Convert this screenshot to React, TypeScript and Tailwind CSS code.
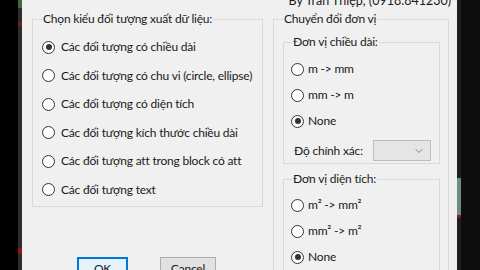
import React from 'react';
import { ChevronDown } from 'lucide-react';

const Radio = ({ checked = false }: { checked?: boolean }) => (
  <span className="w-[13px] h-[13px] shrink-0 rounded-full border border-[#333333] bg-white flex items-center justify-center">
    {checked && <span className="w-[6px] h-[6px] rounded-full bg-[#333333]" />}
  </span>
);

const exportOptions = [
  { label: 'Các đối tượng có chiều dài', checked: true },
  { label: 'Các đối tượng có chu vi (circle, ellipse)' },
  { label: 'Các đối tượng có diện tích' },
  { label: 'Các đối tượng kích thước chiều dài' },
  { label: 'Các đối tượng att trong block có att' },
  { label: 'Các đối tượng text' },
];

const lengthOptions = [
  { label: 'm -> mm' },
  { label: 'mm -> m' },
  { label: 'None', checked: true },
];

const areaOptions = [
  { label: 'm² -> mm²' },
  { label: 'mm² -> m²' },
  { label: 'None', checked: true },
];

const App = () => {
  return (
    <div
      className="w-[480px] h-[270px] flex overflow-hidden bg-black text-[12px] tracking-[-0.2px] text-[#1a1a1a]"
      style={{ fontFamily: 'Lato, "Liberation Sans", sans-serif' }}
    >
      {/* Left edge of screen */}
      <div className="w-[18px] shrink-0 bg-black" />
      <div className="w-[4px] shrink-0 bg-[#2d2d2d] flex flex-col">
        <div className="h-[8px] bg-[#3f6b3a]" />
        <div className="h-[14px]" />
        <div className="h-[4px] bg-[#7a1c1c]" />
        <div className="h-[222px]" />
        <div className="h-[6px] bg-[#8a1a1a]" />
      </div>

      {/* Dialog */}
      <div className="w-[435px] shrink-0 bg-[#f0f0f0] overflow-hidden">
        <div className="flex justify-end pr-[6px] -mt-[7px] leading-[16px] text-[12.5px] tracking-normal">
          By Trần Thiệp, (0918.841230)
        </div>

        <div className="flex items-start mt-[2px] pl-[10px]">
          {/* Left column */}
          <div className="w-[231px] shrink-0">
            <fieldset className="w-[231px] min-w-0 border border-[#d9d9d9] px-[9px] pt-[6px] pb-[2px]">
              <legend className="px-[1px] leading-[16px]">Chọn kiểu đối tượng xuất dữ liệu:</legend>
              {exportOptions.map((o) => (
                <div key={o.label} className="h-[28.5px] flex items-center gap-[6px] whitespace-nowrap">
                  <Radio checked={o.checked} />
                  <span>{o.label}</span>
                </div>
              ))}
            </fieldset>

            <div className="flex gap-[32px] mt-[50px] ml-[45px]">
              <button className="w-[51px] h-[23px] bg-[#e5f1fb] border-2 border-[#0078d7] leading-[19px] text-center">
                OK
              </button>
              <button className="w-[56px] h-[23px] bg-[#e1e1e1] border border-[#adadad] leading-[21px] text-center">
                Cancel
              </button>
            </div>
          </div>

          {/* Right column */}
          <fieldset className="ml-[10px] w-[176px] min-w-0 shrink-0 border border-[#d9d9d9] pl-[9px] pr-[8px] pt-[7px] pb-[20px]">
            <legend className="px-[1px] leading-[16px]">Chuyển đổi đơn vị</legend>

            <fieldset className="min-w-0 border border-[#d9d9d9] pl-[7px] pr-[8px] pt-[6px] pb-[2px]">
              <legend className="ml-[1px] px-[1px] leading-[16px]">Đơn vị chiều dài:</legend>
              {lengthOptions.map((o) => (
                <div key={o.label} className="h-[26px] flex items-center gap-[4px] whitespace-nowrap">
                  <Radio checked={o.checked} />
                  <span>{o.label}</span>
                </div>
              ))}
              <div className="mt-[6px] flex items-center justify-between pl-[3px] whitespace-nowrap">
                <span>Độ chính xác:</span>
                <div className="w-[58px] h-[21px] bg-[#e5e5e5] border border-[#bcbcbc] flex items-center justify-end pr-[5px]">
                  <ChevronDown className="w-[12px] h-[12px] text-[#606060]" strokeWidth={1.5} />
                </div>
              </div>
            </fieldset>

            <fieldset className="min-w-0 mt-[7px] border border-[#d9d9d9] pl-[7px] pr-[8px] pt-[5px] pb-[2px]">
              <legend className="ml-[1px] px-[1px] leading-[16px]">Đơn vị diện tích:</legend>
              {areaOptions.map((o) => (
                <div key={o.label} className="h-[26px] flex items-center gap-[4px] whitespace-nowrap">
                  <Radio checked={o.checked} />
                  <span>{o.label}</span>
                </div>
              ))}
            </fieldset>
          </fieldset>
        </div>
      </div>

      {/* Right edge of screen */}
      <div className="w-[4px] shrink-0 bg-[#1e1e1e] flex flex-col">
        <div className="h-[178px]" />
        <div className="h-[37px] bg-[#6f8a80]" />
        <div className="h-[3px] bg-[#8a1a1a]" />
      </div>
      <div className="flex-1 bg-[#0d0d0d]" />
    </div>
  );
};

export default App;
